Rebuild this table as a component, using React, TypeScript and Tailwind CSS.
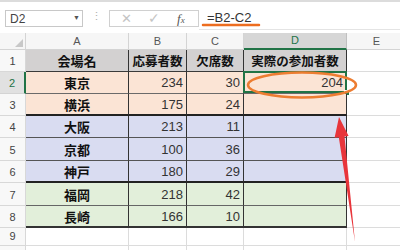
import React from 'react';

type Row = {
  n: number;
  a: string;
  b: string;
  c: string;
  d: string;
  bg: string;
  line: string;
  head?: boolean;
};

// border classes are written out per row so Tailwind can see them
const rows: Row[] = [
  { n: 1, a: '会場名', b: '応募者数', c: '欠席数', d: '実際の参加者数', bg: 'bg-[#d3d1d1]', line: 'border-b border-b-[#3a3a3a]', head: true },
  { n: 2, a: '東京', b: '234', c: '30', d: '204', bg: 'bg-[#fbe4d5]', line: 'border-b border-b-[#6a6a6a]' },
  { n: 3, a: '横浜', b: '175', c: '24', d: '', bg: 'bg-[#fbe4d5]', line: 'border-b-2 border-b-[#222]' },
  { n: 4, a: '大阪', b: '213', c: '11', d: '', bg: 'bg-[#d9dcf1]', line: 'border-b border-b-[#555]' },
  { n: 5, a: '京都', b: '100', c: '36', d: '', bg: 'bg-[#d9dcf1]', line: 'border-b border-b-[#555]' },
  { n: 6, a: '神戸', b: '180', c: '29', d: '', bg: 'bg-[#d9dcf1]', line: 'border-b-2 border-b-[#222]' },
  { n: 7, a: '福岡', b: '218', c: '42', d: '', bg: 'bg-[#e2efda]', line: 'border-b border-b-[#666]' },
  { n: 8, a: '長崎', b: '166', c: '10', d: '', bg: 'bg-[#e2efda]', line: 'border-b-2 border-b-[#333]' },
];

const jp = "font-['Noto_Sans_CJK_JP',sans-serif]";

function FormulaBar() {
  return (
    <div className="flex h-[33px] border-t-2 border-[#dcdcdc] bg-white">
      <div className="ml-[5px] mt-[8px] flex h-[17px] w-[78px] items-center justify-between border border-[#c8c8c8] pl-[4px] pr-[2px] text-[12px] text-[#444]">
        <span>D2</span>
        <span className="text-[7px] text-[#555]">▼</span>
      </div>
      <div className="mt-[9px] flex w-[26px] justify-center text-[11px] leading-none text-[#b0b0b0]">⋮</div>
      <div className="mt-[8px] flex h-[17px] w-[90px] items-center border border-[#d0d0d0] text-[#c4c4c4]">
        <span className="ml-[11px] text-[13px]">✕</span>
        <span className="ml-[16px] text-[14px]">✓</span>
        <span className="ml-[17px] font-['Liberation_Serif',serif] text-[13px] italic text-[#555]">
          f<span className="text-[9px]">x</span>
        </span>
      </div>
      <div className="mb-[3px] flex flex-1 items-center border-b border-[#e4e4e4] pl-[8px] pt-[5px] text-[13px] text-[#333]">
        =B2-C2
      </div>
    </div>
  );
}

function ColumnHeaders() {
  const letters = ['A', 'B', 'C', 'D', 'E'];
  return (
    <>
      <div className="relative border-b border-r border-[#d4d4d4] bg-[#f6f6f6]">
        <svg className="absolute bottom-[2px] right-[2px]" width="8" height="8">
          <polygon points="8,0 8,8 0,8" fill="#c8c8c8" />
        </svg>
      </div>
      {letters.map((l) =>
        l === 'D' ? (
          <div key={l} className="flex items-center justify-center border-b-2 border-r border-b-[#217346] border-r-[#c0c0c0] bg-[#d6d6d6] text-[11px] text-[#217346]">
            {l}
          </div>
        ) : (
          <div key={l} className="flex items-center justify-center border-b border-r border-[#d4d4d4] bg-[#f6f6f6] text-[11px] text-[#555]">
            {l}
          </div>
        )
      )}
    </>
  );
}

function DataRow({ r }: { r: Row }) {
  const selectedRow = r.n === 2;
  return (
    <>
      {selectedRow ? (
        <div className="flex items-end justify-center border-b border-r-2 border-b-[#d4d4d4] border-r-[#217346] bg-[#e1e1e1] pb-[2px] text-[11px] text-[#217346]">
          {r.n}
        </div>
      ) : (
        <div className="flex items-end justify-center border-b border-r border-[#d8d8d8] bg-[#f8f8f8] pb-[2px] text-[11px] text-[#444]">
          {r.n}
        </div>
      )}
      <div className={`flex items-center justify-center border-r border-r-[#333] pt-[1px] ${jp} text-[13px] font-bold text-[#111] ${r.bg} ${r.line}`}>
        {r.a}
      </div>
      {r.head ? (
        <div className={`flex items-center justify-center border-r border-r-[#333] pt-[1px] ${jp} text-[12.5px] font-bold text-[#111] ${r.bg} ${r.line}`}>
          {r.b}
        </div>
      ) : (
        <div className={`flex items-center justify-end border-r border-r-[#333] pr-[3px] pt-[1px] text-[13px] text-[#333] ${r.bg} ${r.line}`}>
          {r.b}
        </div>
      )}
      {r.head ? (
        <div className={`flex items-center justify-center border-r border-r-[#333] pt-[1px] ${jp} text-[12.5px] font-bold text-[#111] ${r.bg} ${r.line}`}>
          {r.c}
        </div>
      ) : (
        <div className={`flex items-center justify-end border-r border-r-[#333] pr-[3px] pt-[1px] text-[13px] text-[#333] ${r.bg} ${r.line}`}>
          {r.c}
        </div>
      )}
      {r.head ? (
        <div className={`flex items-center justify-center border-r border-r-[#333] pt-[1px] ${jp} text-[12.5px] font-bold text-[#111] ${r.bg} ${r.line}`}>
          {r.d}
        </div>
      ) : (
        <div className={`relative flex items-center justify-end border-r border-r-[#333] pr-[3px] pt-[1px] text-[13px] text-[#333] ${r.bg} ${r.line}`}>
          {r.d}
          {selectedRow && (
            <>
              <div className="absolute -left-[1px] -top-[1px] bottom-0 -right-[1px] border-2 border-[#217346]" />
              <div className="absolute -bottom-[3px] -right-[4px] h-[6px] w-[6px] border border-white bg-[#217346]" />
            </>
          )}
        </div>
      )}
      <div className="border-b border-r border-[#dcdcdc] bg-white" />
    </>
  );
}

function EmptyRow({ n }: { n: number }) {
  return (
    <>
      <div className="flex items-end justify-center border-b border-r border-[#d8d8d8] bg-[#f8f8f8] pb-[1px] text-[11px] text-[#444]">
        {n}
      </div>
      <div className="border-b border-r border-[#dcdcdc]" />
      <div className="border-b border-r border-[#dcdcdc]" />
      <div className="border-b border-r border-[#dcdcdc]" />
      <div className="border-b border-r border-[#dcdcdc]" />
      <div className="border-b border-r border-[#dcdcdc]" />
    </>
  );
}

function Overlay() {
  return (
    <svg className="pointer-events-none absolute left-0 top-0" width="400" height="250">
      <line x1="203" y1="25" x2="259" y2="25" stroke="#ed6d1f" strokeWidth="2.5" strokeLinecap="round" />
      <ellipse cx="302" cy="85" rx="54" ry="12.5" fill="none" stroke="#ed7d31" strokeWidth="2.5" />
      <polygon
        points="339,117 348.6,136 344.5,136.4 355,242 338.8,137.2 334.6,137.8"
        fill="#e8353b"
      />
    </svg>
  );
}

export default function App() {
  return (
    <div className="relative h-[250px] w-[400px] overflow-hidden bg-white font-['Liberation_Sans',sans-serif]">
      <FormulaBar />
      <div className="grid grid-cols-[26px_103px_58px_57px_103px_60px] grid-rows-[17px_22px_22px_22px_22px_23px_22px_23px_22px_18px_20px]">
        <ColumnHeaders />
        {rows.map((r) => (
          <DataRow key={r.n} r={r} />
        ))}
        <EmptyRow n={9} />
        <EmptyRow n={10} />
      </div>
      <Overlay />
    </div>
  );
}
